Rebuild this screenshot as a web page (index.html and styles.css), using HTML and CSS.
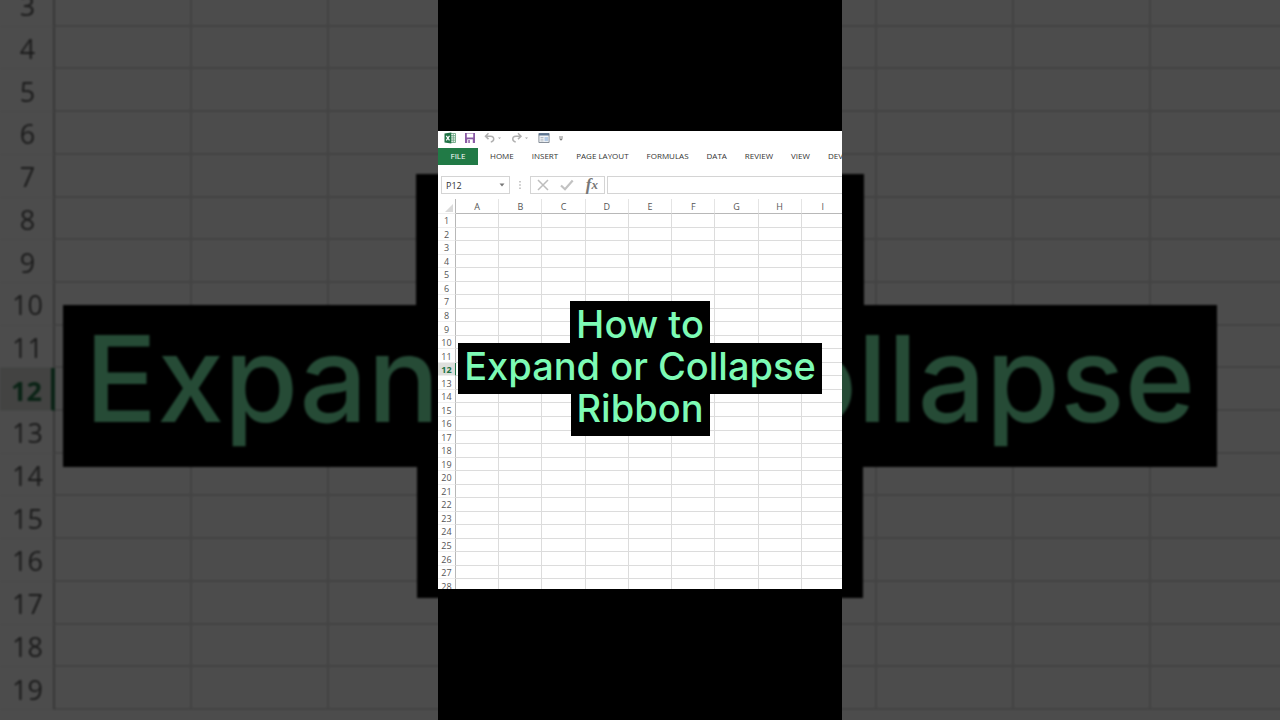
FILE: index.html
```
<!DOCTYPE html>
<html lang="en">

<head>
    <meta charset="UTF-8">
    <meta name="viewport" content="width=device-width, initial-scale=1.0">
    <title>How to Expand or Collapse Ribbon</title>
    <link rel="stylesheet" href="styles.css">
</head>

<body>
    <!-- enlarged, dimmed copy behind the video -->
    <div class="backdrop" aria-hidden="true">
        <table class="grid grid-large">
            <tbody id="backRows"></tbody>
        </table>
        <div class="caption caption-large">
            <span>How to</span>
            <span>Expand or Collapse</span>
            <span>Ribbon</span>
        </div>
    </div>

    <main class="video">
        <div class="excel">
            <div class="quick">
                <button class="icon" aria-label="Excel">
                    <svg width="12" height="12" viewBox="0 0 12 12">
                        <path d="M6 1.5h5.5v9H6z" fill="#fff" stroke="#5c9c76" stroke-width=".8" />
                        <path d="M7 3.5h4M7 5.2h4M7 7h4M7 8.7h4M9.3 2v8" stroke="#5c9c76" stroke-width=".7" />
                        <path d="M.5 1.5L7.3.4v11.2L.5 10.5z" fill="#217346" />
                        <path d="M2.3 3.8l3.2 4.5M5.5 3.8L2.3 8.3" stroke="#fff" stroke-width="1.2" />
                    </svg>
                </button>
                <button class="icon" aria-label="Save">
                    <svg width="12" height="12" viewBox="0 0 12 12">
                        <path d="M1 1h10v10H1z" fill="#8a5aa5" />
                        <path d="M2.8 1.5h6.4v4H2.8z" fill="#fff" />
                        <path d="M3.2 7.3h5.6V11H3.2z" fill="#fff" />
                        <path d="M4.3 8h1.5v3H4.3z" fill="#8a5aa5" />
                    </svg>
                </button>
                <button class="icon wide" aria-label="Undo">
                    <svg width="18" height="12" viewBox="0 0 18 12">
                        <path d="M4.5 1.3L1.5 4.2l3 2.9M1.8 4.2h4.7c2.7 0 3.4 1.6 3.2 3.2-.2 1.5-1.4 2.3-2.9 2.6" fill="none" stroke="#b0b0b0" stroke-width="1.5" />
                        <path d="M14 5.5h3l-1.5 1.6z" fill="#a8a8a8" />
                    </svg>
                </button>
                <button class="icon wide" aria-label="Redo">
                    <svg width="18" height="12" viewBox="0 0 18 12">
                        <path d="M7 1.3l3 2.9-3 2.9M9.7 4.2H5C2.3 4.2 1.6 5.8 1.8 7.4 2 8.9 3.2 9.7 4.7 10" fill="none" stroke="#b0b0b0" stroke-width="1.5" />
                        <path d="M14 5.5h3l-1.5 1.6z" fill="#a8a8a8" />
                    </svg>
                </button>
                <button class="icon" aria-label="Form">
                    <svg width="12" height="12" viewBox="0 0 12 12">
                        <path d="M.9 1.5h10.2v9H.9z" fill="#f4f6f8" stroke="#7c8590" stroke-width=".9" />
                        <path d="M.9 1.3h10.2v2.2H.9z" fill="#5d7591" />
                        <path d="M2.5 5.5h3M2.5 7.2h3M2.5 8.9h3" stroke="#a5acb5" stroke-width=".8" />
                        <path d="M6.5 5h3.5v4.2H6.5z" fill="#b4cbe6" />
                    </svg>
                </button>
                <button class="icon" aria-label="Customize">
                    <svg width="6" height="12" viewBox="0 0 6 12">
                        <path d="M1 5h4" stroke="#777" stroke-width=".9" />
                        <path d="M1 6.6h4L3 8.8z" fill="#777" />
                    </svg>
                </button>
            </div>

            <nav class="tabs">
                <button class="tab file">FILE</button>
                <button class="tab">HOME</button>
                <button class="tab">INSERT</button>
                <button class="tab">PAGE LAYOUT</button>
                <button class="tab">FORMULAS</button>
                <button class="tab">DATA</button>
                <button class="tab">REVIEW</button>
                <button class="tab">VIEW</button>
                <button class="tab">DEVELOPER</button>
            </nav>

            <div class="formula">
                <div class="namebox">
                    <input type="text" value="P12" aria-label="Name box">
                    <button class="icon" aria-label="Open names">
                        <svg width="6" height="4" viewBox="0 0 6 4">
                            <path d="M.5.5h5L3 3.5z" fill="#777" />
                        </svg>
                    </button>
                </div>
                <svg class="dots" width="2" height="8" viewBox="0 0 2 8">
                    <path d="M1 0v8" stroke="#a5a5a5" stroke-width="1.2" stroke-dasharray="1.4 1.9" />
                </svg>
                <div class="actions">
                    <button class="icon" aria-label="Cancel">
                        <svg width="12" height="12" viewBox="0 0 12 12">
                            <path d="M1 1l10 10M11 1L1 11" stroke="#bdbdbd" stroke-width="1.5" />
                        </svg>
                    </button>
                    <button class="icon" aria-label="Enter">
                        <svg width="14" height="12" viewBox="0 0 14 12">
                            <path d="M1 6.5l4 3.7L12.7 1.5" fill="none" stroke="#c2c2c2" stroke-width="2.2" />
                        </svg>
                    </button>
                    <button class="icon fx" aria-label="Insert function">f<small>x</small></button>
                </div>
                <input class="entry" type="text" aria-label="Formula bar">
            </div>

            <table class="grid">
                <thead>
                    <tr>
                        <th class="corner">
                            <svg width="8" height="8" viewBox="0 0 8 8">
                                <path d="M8 0v8H0z" fill="#dadada" />
                            </svg>
                        </th>
                        <th>A</th>
                        <th>B</th>
                        <th>C</th>
                        <th>D</th>
                        <th>E</th>
                        <th>F</th>
                        <th>G</th>
                        <th>H</th>
                        <th>I</th>
                    </tr>
                </thead>
                <tbody id="rows"></tbody>
            </table>
        </div>

        <div class="caption">
            <span>How to</span>
            <span>Expand or Collapse</span>
            <span>Ribbon</span>
        </div>
    </main>

    <script>
        function addRows(id, first, last) {
            const body = document.getElementById(id);

            for (let i = first; i <= last; i++) {
                const tr = document.createElement('tr');
                const th = document.createElement('th');
                th.textContent = i;
                if (i === 12) {
                    th.className = 'active';
                }
                tr.appendChild(th);

                for (let c = 0; c < 9; c++) {
                    tr.appendChild(document.createElement('td'));
                }
                body.appendChild(tr);
            }
        }

        addRows('rows', 1, 28);
        addRows('backRows', 3, 19);
    </script>
</body>

</html>
```
FILE: styles.css
```
* {
    box-sizing: border-box;
}

body {
    margin: 0;
    height: 100vh;
    overflow: hidden;
    display: flex;
    justify-content: center;
    background-color: #000;
    font-family: "Open Sans", "Noto Sans", sans-serif;
}

button,
input {
    margin: 0;
    padding: 0;
    border: none;
    background: none;
    font-family: inherit;
    font-size: 8px;
    color: #333;
}

/* backdrop */
.backdrop {
    position: absolute;
    inset: 0;
    overflow: hidden;
    background-color: #fff;
    filter: brightness(0.3);
}

/* video */
.video {
    position: relative;
    height: 100%;
    min-width: 0;
    aspect-ratio: 101 / 180;
    display: flex;
    flex-direction: column;
    justify-content: center;
    background-color: #000;
}

.excel {
    height: 458px;
    overflow: hidden;
    background-color: #fff;
}

.icon {
    display: flex;
    align-items: center;
    justify-content: center;
}

.quick {
    display: flex;
    align-items: center;
    gap: 8px;
    height: 14px;
    margin-bottom: 3px;
    padding-left: 6px;
}

.wide {
    margin-right: 1px;
}

.tabs {
    display: flex;
    gap: 18px;
    height: 17px;
    white-space: nowrap;
}

.tab {
    flex: none;
    padding-bottom: 2px;
    line-height: 15px;
}

.file {
    width: 40px;
    margin-right: -6px;
    background-color: #217a46;
    color: #fff;
}

.formula {
    display: flex;
    align-items: center;
    height: 18px;
    margin: 11px 0 5px 3px;
}

.namebox {
    display: flex;
    width: 69px;
    height: 18px;
    padding: 0 4px;
    border: 1px solid #d4d4d4;
}

.namebox input {
    flex: 1;
    min-width: 0;
    font-size: 9px;
}

.dots {
    margin: 0 9px;
}

.actions {
    display: flex;
    align-items: center;
    justify-content: space-between;
    width: 75px;
    height: 18px;
    padding: 0 6px;
    border: 1px solid #d4d4d4;
}

.fx {
    font-family: "Liberation Serif", serif;
    font-size: 17px;
    font-style: italic;
    font-weight: bold;
    line-height: 16px;
    color: #777;
}

.fx small {
    font-size: 13px;
}

.entry {
    flex: 1;
    min-width: 0;
    height: 18px;
    margin-left: 2px;
    border: 1px solid #d4d4d4;
    border-right: none;
}

/* worksheet */
.grid {
    width: calc(100% + 3px);
    height: 394px;
    table-layout: fixed;
    border-collapse: separate;
    border-spacing: 0;
    font-size: 9px;
    line-height: 11px;
    color: #555;
}

.grid th,
.grid td {
    padding: 1px 0 0;
    border-right: 1px solid #dcdcdc;
    border-bottom: 1px solid #dcdcdc;
    font-weight: normal;
    overflow: hidden;
}

.grid thead th {
    height: 15px;
    border-right-color: #e4e4e4;
    border-bottom-color: #b8b8b8;
}

.grid th:first-child {
    width: 18px;
    border-right-color: #b8b8b8;
    border-bottom-color: #eee;
}

.grid .corner {
    padding: 3px 2px 0 0;
    text-align: right;
}

.corner svg {
    display: block;
    margin-left: auto;
}

.grid tbody .active {
    border-right: 1px solid #217346;
    background-color: #dedfdc;
    font-weight: bold;
    color: #217346;
}

.grid-large {
    width: calc(100% + 8px);
    height: 726px;
    margin-top: -16px;
    font-size: 27px;
    line-height: 32px;
    filter: blur(1px);
}

.grid-large td {
    border-width: 0 2px 2px 0;
}

.grid-large th:first-child {
    width: 55px;
    padding: 3px 0 0 2px;
    border-right-width: 2px;
}

.grid-large tbody .active {
    border-right-width: 4px;
}

/* caption */
.caption {
    position: absolute;
    inset: 0;
    display: flex;
    flex-direction: column;
    align-items: center;
    justify-content: center;
    padding-top: 8px;
    font-family: Inter, sans-serif;
    font-size: 38px;
    font-weight: 500;
    line-height: 47px;
    white-space: nowrap;
    color: #7dfbb5;
}

.caption span {
    margin-bottom: -9px;
    padding: 0 6px 4px;
    background-color: #000;
}

.caption-large {
    padding-top: 20px;
    font-size: 120px;
    line-height: 148px;
    filter: blur(1px);
}

.caption-large span {
    margin-bottom: -31px;
    padding: 0 22px 14px;
}
```
